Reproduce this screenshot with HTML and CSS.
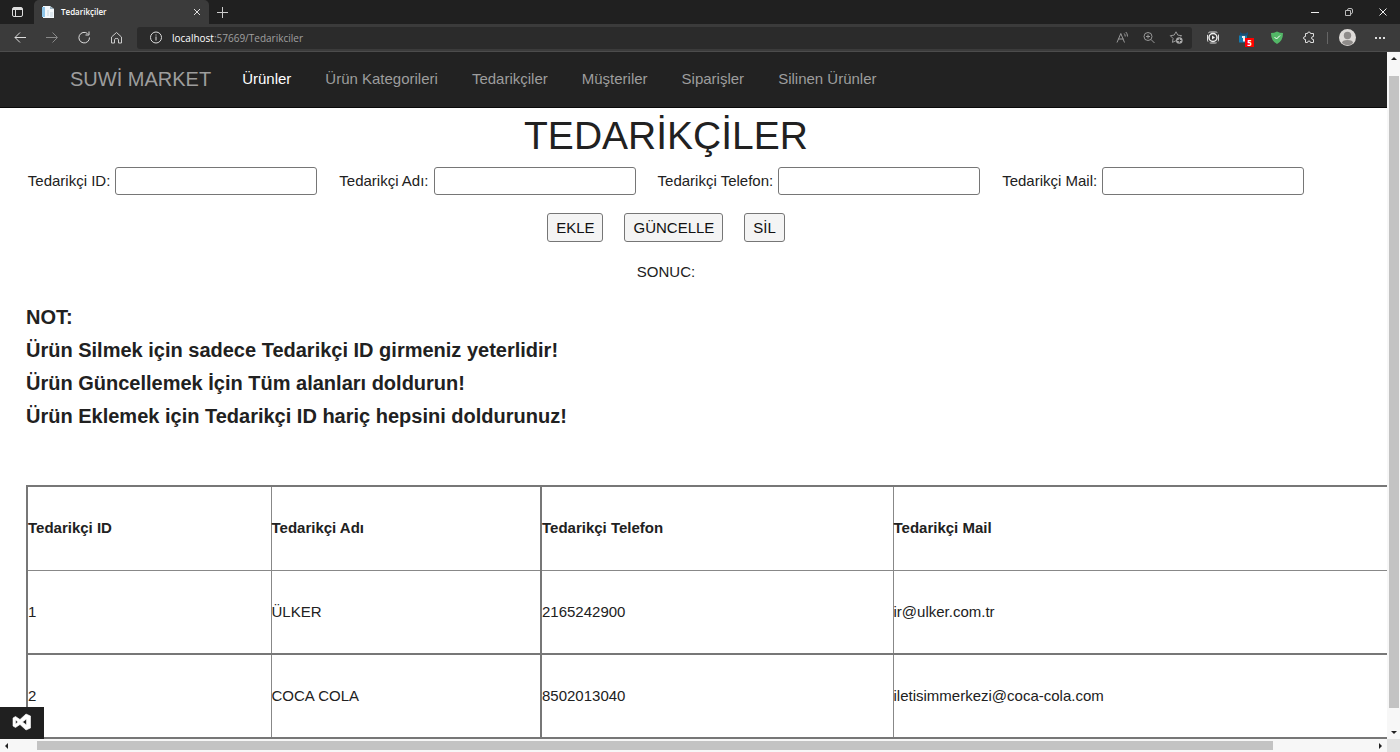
FILE: index.html
```
<!DOCTYPE html>
<html lang="tr">
<head>
<meta charset="utf-8">
<title>Tedarikçiler</title>
<link rel="stylesheet" href="styles.css">
</head>
<body>
<div class="browser">
  <header class="tabstrip">
    <button class="icon-btn tab-actions" aria-label="Sekme işlemleri"><svg width="12" height="12" viewBox="0 0 12 12"><rect x="1.500" y="1.500" width="10" height="9" rx="1.500" fill="none" stroke="#ddd"/><path d="M2 2h9v2H2z" fill="#ddd"/><path d="M4.500 4v6" stroke="#ddd"/></svg></button>
    <div class="tab">
      <svg width="12" height="12" viewBox="0 0 12 12"><path d="M1 0h7l4 3v9H1z" fill="#f4f8fb"/><path d="M0 1h3v10H0z" fill="#8fc6ea"/><path d="M5 4h2v6H5zM8 6h3v5H8z" fill="#dde8ef"/><path d="M8 0v3h4z" fill="#9db4c2"/></svg>
      <span class="tab-title">Tedarikçiler</span>
      <button class="icon-btn" aria-label="Sekmeyi kapat"><svg width="8" height="8" viewBox="0 0 8 8"><path d="M1 1l6 6M7 1L1 7" stroke="#ddd"/></svg></button>
    </div>
    <button class="icon-btn new-tab" aria-label="Yeni sekme"><svg width="12" height="12" viewBox="0 0 12 12"><path d="M6.500 1v11M1 6.500h11" stroke="#ccc"/></svg></button>
    <div class="window-controls">
      <button class="icon-btn" aria-label="Küçült"><svg width="10" height="10" viewBox="0 0 10 10"><path d="M1 5.500h8" stroke="#eee"/></svg></button>
      <button class="icon-btn" aria-label="Geri yükle"><svg width="10" height="10" viewBox="0 0 10 10"><path d="M1.500 3.500h5v5h-5zM3.500 3q0-1.500 1.500-1.500h2q1.500 0 1.500 1.500v2Q8.500 6.500 7 7" fill="none" stroke="#bbb"/></svg></button>
      <button class="icon-btn" aria-label="Kapat"><svg width="10" height="10" viewBox="0 0 10 10"><path d="M1.500 1.500l7 7M8.500 1.500l-7 7" stroke="#eee"/></svg></button>
    </div>
  </header>
  <div class="toolbar">
    <div class="nav-buttons">
      <button class="icon-btn" aria-label="Geri"><svg width="14" height="14" viewBox="0 0 14 14"><path d="M13 6.500H2M7 1.500l-5 5 5 5" fill="none" stroke="#ddd"/></svg></button>
      <button class="icon-btn" aria-label="İleri"><svg width="14" height="14" viewBox="0 0 14 14"><path d="M1 6.500h11M7.500 1.500l5 5-5 5" fill="none" stroke="#888"/></svg></button>
      <button class="icon-btn" aria-label="Yenile"><svg width="14" height="14" viewBox="0 0 14 14"><path d="M12.500 6.500A5.300 5.300 0 1 1 10.500 2.500M12 .5v3.500H8.500" fill="none" stroke="#ddd"/></svg></button>
      <button class="icon-btn" aria-label="Giriş"><svg width="14" height="14" viewBox="0 0 14 14"><path d="M2.500 6L7.500 1.500l5 4.500v6h-3V8.500Q9.500 7.500 7.500 7.500T5.500 8.500V12h-3z" fill="none" stroke="#ccc" stroke-linejoin="round"/></svg></button>
    </div>
    <div class="address">
      <svg width="14" height="14" viewBox="0 0 14 14"><circle cx="7" cy="6.500" r="5.500" fill="none" stroke="#ddd"/><path d="M7 5.500v4M7 3.500v1" stroke="#ddd"/></svg>
      <span class="url"><b>localhost</b>:57669/Tedarikciler</span>
      <svg width="14" height="14" viewBox="0 0 14 14"><path d="M2 11.500L5.800 2.500l3.700 9M3.500 8h5M9.200 2.500q1 1 1 3M10.800 1q1.700 1.500 1.700 4.500" fill="none" stroke="#999"/></svg>
      <svg width="14" height="14" viewBox="0 0 14 14"><circle cx="6" cy="5.500" r="4" fill="none" stroke="#999"/><path d="M9 8.500l3.500 3.500M4 5.500h4M6 3.500v4" stroke="#999"/></svg>
      <svg width="14" height="14" viewBox="0 0 14 14"><path d="M11.500 5.700l1.200-1-3.900-.6L7 .8 5.200 4.100l-3.900.6 2.800 2.800-.7 3.900L7 9.700" fill="none" stroke="#999"/><circle cx="10.300" cy="9.500" r="3.300" fill="#aaa"/><path d="M10.300 7.500v4M8.300 9.500h4" stroke="#2d2d2d"/></svg>
    </div>
    <div class="extensions">
      <svg width="14" height="14" viewBox="0 0 14 14"><rect x="1.500" y="1" width="11" height="11" rx="3" fill="none" stroke="#ddd" stroke-dasharray="7 2"/><circle cx="7" cy="6.500" r="4" fill="none" stroke="#eee" stroke-width="1.500"/><path d="M6 4.500l3 2-3 2z" fill="#eee"/></svg>
      <span class="badged"><svg width="14" height="14" viewBox="0 0 14 14"><path d="M2 1l2.500 1.500h3L10 1v3.500H2z" fill="#164f79"/><path d="M1 4.500h8v7H1z" fill="#147bb0"/><path d="M4 5h3v5.500H5V7H4z" fill="#eee"/></svg><span class="badge">5</span></span>
      <svg width="14" height="14" viewBox="0 0 14 14"><path d="M7 .5q3 1.500 6 1.500Q13 10 7 13 1 10 1 2 4 2 7 .5z" fill="#53b767"/><path d="M4.500 6l2 2L10 4.500" fill="none" stroke="#fff"/></svg>
      <svg width="14" height="14" viewBox="0 0 14 14"><path d="M3.500 2.500h2q0-1.500 1.500-1.500t1.500 1.500h3v3Q9.500 5.500 9.500 7t2 1.500v3h-3Q8.500 10 7 10t-1.500 1.500h-2v-3Q1.500 8.500 1.500 7t2-1.500z" fill="none" stroke="#ddd" stroke-linejoin="round"/></svg>
      <span class="divider"></span>
      <svg class="avatar" width="17" height="17" viewBox="0 0 17 17"><circle cx="8.500" cy="8.500" r="8.500" fill="#dedbd8"/><circle cx="8.500" cy="6.500" r="3.700" fill="#8f8c8a"/><path d="M3 14q0-3 5.500-3t5.500 3q-5 4.500-11 0z" fill="#8f8c8a"/></svg>
      <button class="icon-btn" aria-label="Diğer"><svg width="12" height="4" viewBox="0 0 12 4"><path d="M1 1h2v2H1zM5 1h2v2H5zM9 1h2v2H9z" fill="#ddd"/></svg></button>
    </div>
  </div>
  <div class="viewport">
    <div class="page">
      <nav class="navbar">
        <a class="brand" href="#">SUWİ MARKET</a>
        <a class="active" href="#">Ürünler</a>
        <a href="#">Ürün Kategorileri</a>
        <a href="#">Tedarikçiler</a>
        <a href="#">Müşteriler</a>
        <a href="#">Siparişler</a>
        <a href="#">Silinen Ürünler</a>
      </nav>
      <main>
        <form class="form">
          <h1>TEDARİKÇİLER</h1>
          <div class="fields">
            <div class="field"><label for="tid">Tedarikçi ID:</label><input id="tid" type="text"></div>
            <div class="field"><label for="tad">Tedarikçi Adı:</label><input id="tad" type="text"></div>
            <div class="field"><label for="ttel">Tedarikçi Telefon:</label><input id="ttel" type="text"></div>
            <div class="field"><label for="tmail">Tedarikçi Mail:</label><input id="tmail" type="text"></div>
          </div>
          <div class="actions">
            <button type="button">EKLE</button>
            <button type="button">GÜNCELLE</button>
            <button type="button">SİL</button>
          </div>
          <p class="result">SONUC:</p>
        </form>
        <div class="notes">
          <h2>NOT:</h2>
          <h2>Ürün Silmek için sadece Tedarikçi ID girmeniz yeterlidir!</h2>
          <h2>Ürün Güncellemek İçin Tüm alanları doldurun!</h2>
          <h2>Ürün Eklemek için Tedarikçi ID hariç hepsini doldurunuz!</h2>
        </div>
        <table class="suppliers">
          <colgroup><col class="c-id"><col class="c-name"><col class="c-phone"><col></colgroup>
          <thead><tr><th>Tedarikçi ID</th><th>Tedarikçi Adı</th><th>Tedarikçi Telefon</th><th>Tedarikçi Mail</th></tr></thead>
          <tbody>
            <tr><td>1</td><td>ÜLKER</td><td>2165242900</td><td>ir@ulker.com.tr</td></tr>
            <tr><td>2</td><td>COCA COLA</td><td>8502013040</td><td>iletisimmerkezi@coca-cola.com</td></tr>
          </tbody>
        </table>
      </main>
      <div class="vs-badge"><svg width="20" height="18" viewBox="0 0 20 18"><path fill-rule="evenodd" d="M14 1l4.500 2v12L14 17 8 11.500 3.500 14.500 1 13V5l2.500-1.500L8 6.500zM14.500 6L10.500 9l4 3zM3.500 7v4L6 9z" fill="#fff" stroke="#fff" stroke-width=".6" stroke-linejoin="round"/></svg></div>
    </div>
    <div class="scroll-v"><span class="arrow up"></span><span class="thumb"></span><span class="arrow down"></span></div>
    <div class="scroll-h"><span class="arrow left"></span><span class="thumb"></span><span class="arrow right"></span></div>
    <div class="corner"></div>
  </div>
</div>
</body>
</html>
```
FILE: styles.css
```
* { box-sizing: border-box; }
body {
  margin: 0;
  background: #fff;
  color: #212121;
  font: 15px/24px "Liberation Sans", Arial, sans-serif;
}
svg { display: block; flex: none; }
.browser { display: flex; flex-direction: column; height: 100vh; overflow: hidden; }
.icon-btn { display: flex; padding: 0; border: 0; background: none; }

.tabstrip { display: flex; align-items: center; height: 24px; flex: none; background: #202020; }
.tab-actions { padding: 0 11px; }
.tab {
  display: flex; align-items: center; gap: 7px;
  width: 175px; height: 24px; padding: 0 8px;
  background: #3b3b3b; border-radius: 5px 5px 0 0;
}
.tab-title { flex: 1; color: #fff; font: 600 8px/12px "Open Sans", sans-serif; }
.new-tab { margin-left: 7px; }
.window-controls { display: flex; gap: 24px; margin-left: auto; padding-right: 12px; }

.toolbar {
  display: flex; align-items: center; height: 28px; flex: none;
  background: #3b3b3b; border-bottom: 1px solid #4c4c4c;
}
.nav-buttons { display: flex; gap: 18px; padding: 0 14px 0 13px; }
.address {
  display: flex; flex: 1; align-items: center; gap: 13px;
  height: 22px; padding: 0 9px 0 12px; background: #2b2b2b; border-radius: 3px;
}
.url { flex: 1; margin-left: -4px; color: #a0a0a0; font: 10px/14px "Open Sans", sans-serif; }
.url b { color: #fff; font-weight: 400; }
.extensions { display: flex; align-items: center; gap: 18px; padding: 0 14px; }
.badged { position: relative; }
.badge {
  position: absolute; left: 7px; top: 7px; width: 9px; height: 9px;
  background: #f00; color: #fff; font: bold 8px/9px "Open Sans", sans-serif; text-align: center;
}
.divider { width: 1px; height: 12px; margin: 0 -7px; background: #666; }

.viewport { flex: 1; min-height: 0; display: grid; grid-template: minmax(0, 1fr) 13px / minmax(0, 1fr) 13px; }
.page { position: relative; overflow: hidden; }
.navbar {
  display: flex; align-items: center; gap: 34px;
  height: 56px; padding: 0 0 2px 70px; background: #222; border-bottom: 1px solid #090909;
}
.navbar a { color: #9d9d9d; text-decoration: none; }
.navbar .brand { margin-right: -3px; font-size: 20px; }
.navbar .active { color: #fff; }

main { padding-left: 26px; }
.form { display: flex; flex-direction: column; align-items: center; padding-right: 81px; }
h1 { margin: 4px 0 7px; font-size: 39px; line-height: 48px; font-weight: 400; }
.fields { display: flex; gap: 22px; white-space: nowrap; }
.field { display: flex; align-items: center; gap: 5px; }
.field input {
  width: 202px; height: 28px; padding: 1px 2px;
  border: 1px solid #767676; border-radius: 3px; font: inherit;
}
.actions { display: flex; gap: 21px; margin-top: 18px; }
.actions button {
  height: 29px; padding: 0 8px; border: 1px solid #767676; border-radius: 3px;
  background: #f4f4f4; color: #111; font: inherit;
}
.result { margin: 18px 0 0; }
.notes { margin-top: 21px; }
h2 { margin: 0 0 8px; font-size: 20px; line-height: 25px; font-weight: 700; }

.suppliers {
  width: 1660px; margin-top: 56px; table-layout: fixed;
  border-collapse: collapse; border: 2px solid #777;
}
.suppliers th, .suppliers td { height: 84px; padding: 0; border: 1px solid #888; text-align: left; }
.suppliers th:nth-child(3), .suppliers td:nth-child(3) { border-left: 2px solid #777; }
.suppliers tbody tr:nth-child(2) td { border-top: 2px solid #777; }
.c-id { width: 244px; }
.c-name { width: 270px; }
.c-phone { width: 352px; }
.vs-badge {
  position: absolute; left: 0; bottom: 0; display: grid; place-items: center;
  width: 44px; height: 32px; padding-bottom: 3px; background: #202020;
}

.scroll-v, .scroll-h { display: flex; align-items: center; justify-content: space-between; background: #f7f7f7; }
.scroll-v { flex-direction: column; padding: 5px 0; }
.scroll-h { padding: 0 5px; }
.scroll-v .thumb { width: 10px; flex: 1; margin: 16px 0 23px; background: #c3c3c3; }
.scroll-h .thumb { height: 9px; flex: 1; margin: 0 106px 0 29px; background: #c3c3c3; }
.arrow { border: 3px solid transparent; }
.up { border-top: 0; border-bottom-color: #222; }
.down { border-bottom: 0; border-top-color: #222; }
.left { border-left: 0; border-right-color: #222; }
.right { border-right: 0; border-left-color: #222; }
.corner { background: #e2e2e2; }
```
